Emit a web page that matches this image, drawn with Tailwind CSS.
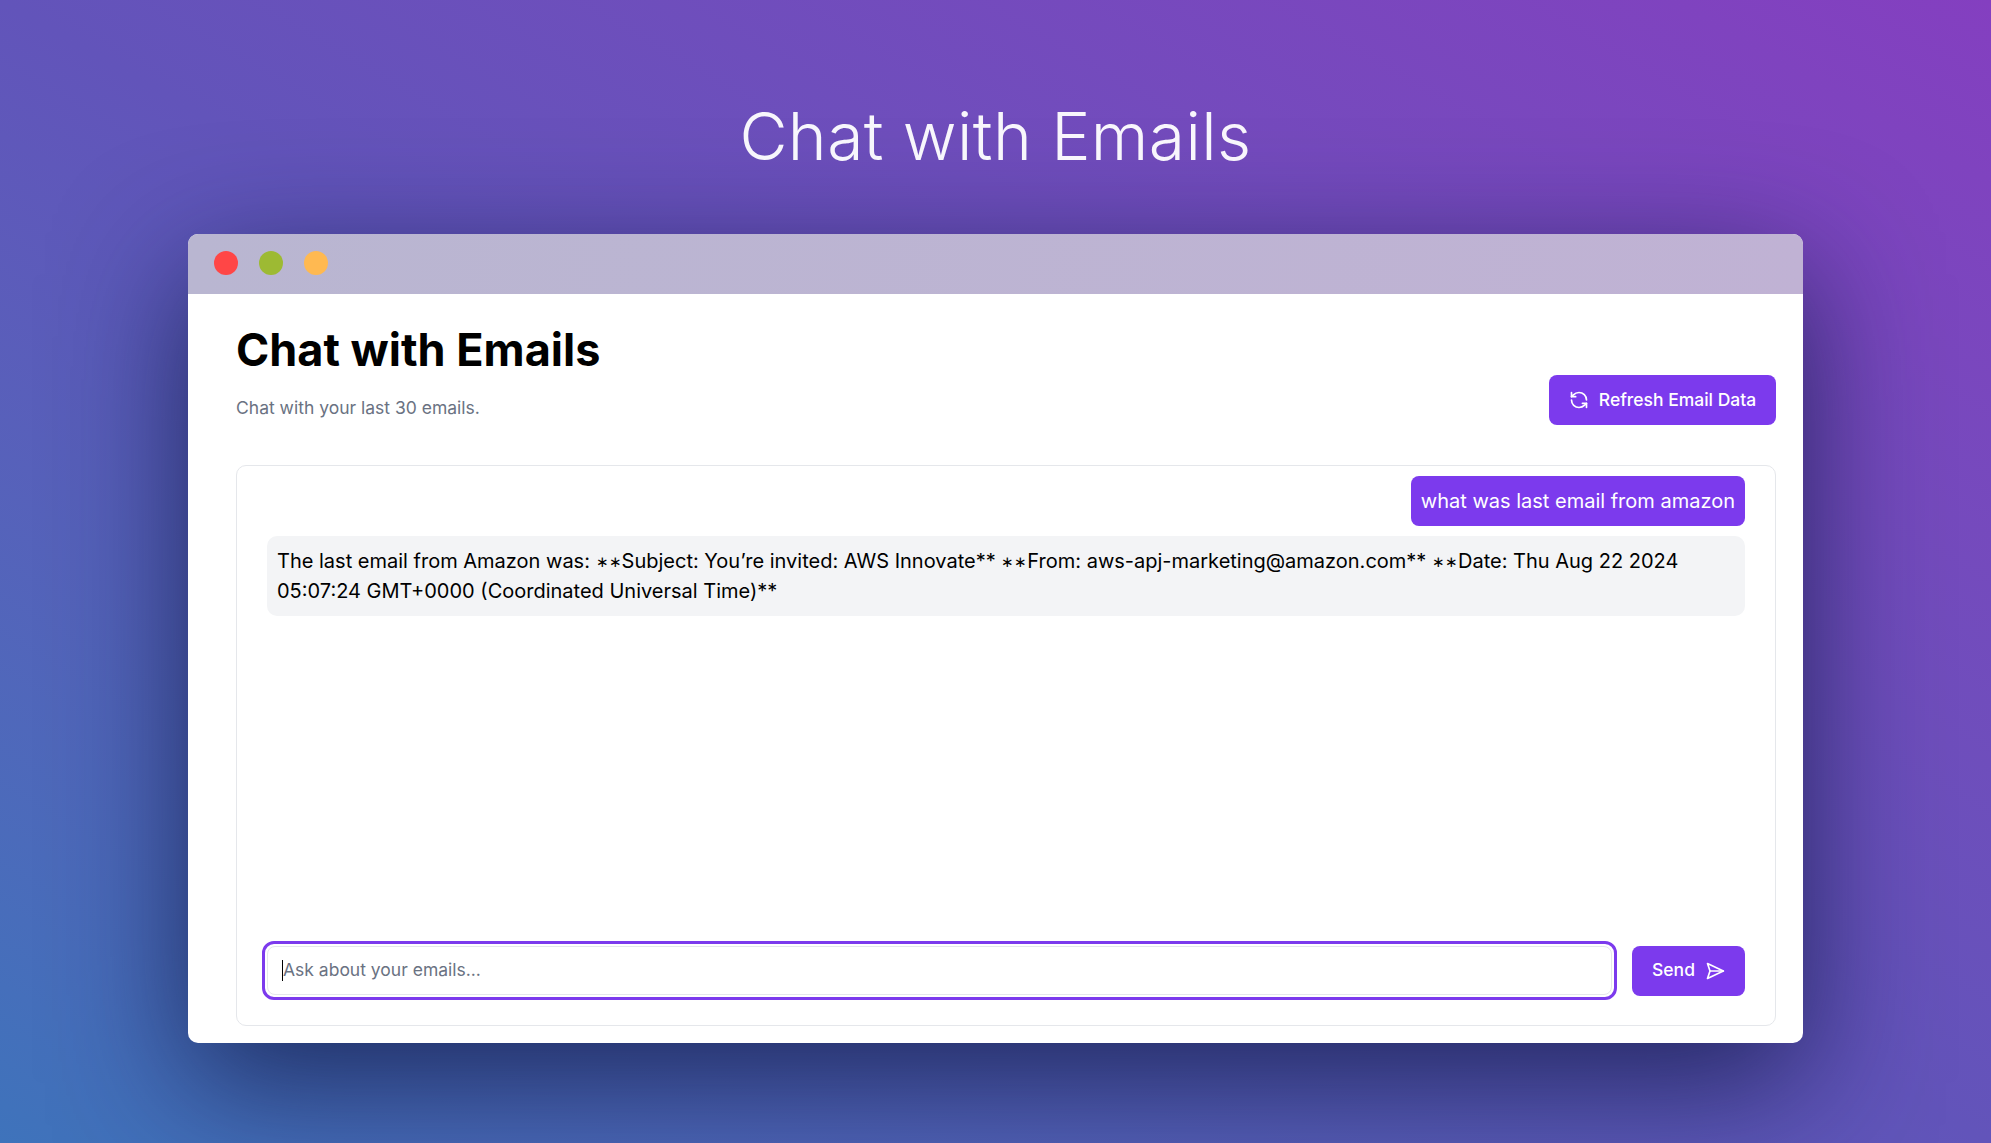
<!DOCTYPE html>
<html lang="en">
<head>
    <meta charset="UTF-8">
    <title>Chat with Emails</title>
    <script src="https://cdn.jsdelivr.net/npm/@tailwindcss/browser@4"></script>
</head>
<body class="h-[1143px] overflow-hidden bg-linear-to-tr from-[#3e73bb] via-[#6254ba] to-[#843fc0] font-['Inter',sans-serif]">

<h1 class="pt-[99px] h-[234px] text-center text-[66px] leading-[74px] tracking-[0.4px] font-light text-white/95">Chat with Emails</h1>

<!-- app window -->
<div class="mx-[188px] h-[809px] rounded-[10px] bg-white shadow-[0_40px_130px_rgba(15,25,70,0.78)] flex flex-col">
    <div class="h-[60px] shrink-0 rounded-t-[10px] bg-linear-to-r from-[#b9b6d1] to-[#c0b2d4] flex items-center gap-[21px] pl-[26px] pb-[2px]">
        <span class="w-6 h-6 rounded-full bg-[#ff4646]"></span>
        <span class="w-6 h-6 rounded-full bg-[#9dba33]"></span>
        <span class="w-6 h-6 rounded-full bg-[#ffb951]"></span>
    </div>

    <div class="flex-1 flex flex-col pl-12 pr-[27px] pb-[17px]">
        <div class="flex justify-between items-end h-[171px] pb-[40px]">
            <div class="pb-[5px]">
                <h2 class="text-[45px] leading-[50px] font-bold text-black">Chat with Emails</h2>
                <p class="mt-[20px] text-[17.5px] leading-[25px] text-gray-500">Chat with your last 30 emails.</p>
            </div>
            <button class="h-[50px] w-[227px] rounded-[8px] bg-[#7c3aed] text-white text-[17.5px] font-medium flex items-center justify-center gap-[10px]">
                <svg class="w-5 h-5" viewBox="0 0 24 24" fill="none" stroke="currentColor" stroke-width="2" stroke-linecap="round" stroke-linejoin="round"><path d="M21 12a9 9 0 0 0-9-9 9.75 9.75 0 0 0-6.74 2.74L3 8"/><path d="M3 3v5h5"/><path d="M3 12a9 9 0 0 0 9 9 9.75 9.75 0 0 0 6.74-2.74L21 16"/><path d="M16 16h5v5"/></svg>
                Refresh Email Data
            </button>
        </div>

        <!-- chat -->
        <div class="flex-1 flex flex-col rounded-[10px] border border-gray-200 pt-[10px] pr-[30px] pb-[25px] pl-[30px]">
            <div class="flex justify-end">
                <p class="h-[50px] px-[10px] rounded-[8px] bg-[#7c3aed] text-white text-[20px] leading-[50px]">what was last email from amazon</p>
            </div>
            <p class="mt-[10px] px-[10px] py-[10px] rounded-[10px] bg-gray-100 text-[20px] leading-[30px] text-black">The last email from Amazon was: <span class="text-[14.5px] leading-none align-[1px]">∗∗</span>Subject: You’re invited: AWS Innovate** <span class="text-[14.5px] leading-none align-[1px]">∗∗</span>From: aws-apj-marketing@amazon.com** <span class="text-[14.5px] leading-none align-[1px]">∗∗</span>Date: Thu Aug 22 2024 05:07:24 GMT+0000 (Coordinated Universal Time)**</p>

            <div class="mt-auto flex items-center gap-[15px]">
                <div class="relative flex-1 h-[59px] -ml-[5px] rounded-[12px] border-[3px] border-[#7c3aed] p-[2px]">
                    <div class="h-full rounded-[8px] border border-gray-200 flex items-center pl-[14px] text-[17.5px] text-gray-500">
                        <span class="w-px h-[21px] bg-black"></span>Ask about your emails...
                    </div>
                </div>
                <button class="h-[50px] w-[113px] rounded-[8px] bg-[#7c3aed] text-white text-[17.5px] font-medium flex items-center justify-center gap-[10px]">
                    Send
                    <svg class="w-5 h-5" viewBox="0 0 24 24" fill="none" stroke="currentColor" stroke-width="2" stroke-linecap="round" stroke-linejoin="round"><path d="M3 3l3 9-3 9 19-9Z"/><path d="M6 12h16"/></svg>
                </button>
            </div>
        </div>
    </div>
</div>

</body>
</html>
